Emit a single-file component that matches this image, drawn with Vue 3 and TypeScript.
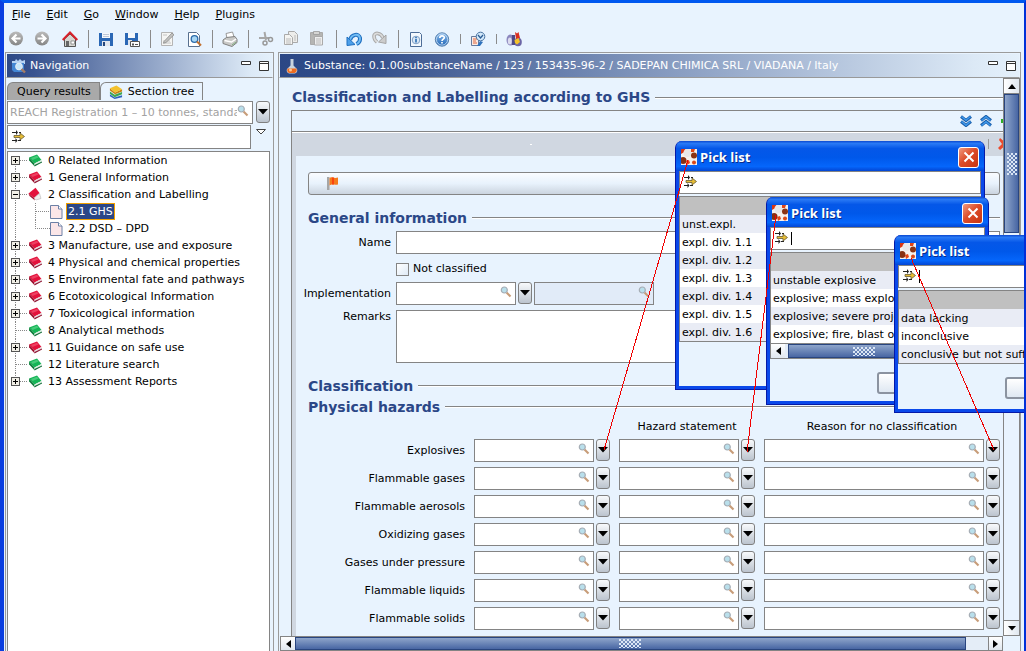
<script setup lang="ts">
import { ref } from 'vue'

interface Tool { icon: string; label: string; kind?: 'home' }
interface TreeNode {
  id: string
  label: string
  icon: 'red' | 'green' | 'open' | 'page'
  expand?: '+' | '-'
  child?: boolean
  last?: boolean
}

const menus = ['File', 'Edit', 'Go', 'Window', 'Help', 'Plugins']

const toolGroups: Tool[][] = [
  [
    { icon: 'back', label: 'Back' },
    { icon: 'forward', label: 'Forward' },
    { icon: 'home', label: 'Home', kind: 'home' },
  ],
  [{ icon: 'save', label: 'Save' }, { icon: 'saveas', label: 'Save as' }],
  [{ icon: 'edit', label: 'Edit' }, { icon: 'preview', label: 'Preview' }],
  [{ icon: 'print', label: 'Print' }],
  [{ icon: 'cut', label: 'Cut' }, { icon: 'copy', label: 'Copy' }, { icon: 'paste', label: 'Paste' }],
  [{ icon: 'undo', label: 'Undo' }, { icon: 'redo', label: 'Redo' }],
  [{ icon: 'info', label: 'Information' }, { icon: 'help', label: 'Help' }],
  [{ icon: 'check', label: 'Check' }],
  [{ icon: 'query', label: 'Query tool' }],
]

const nodes: TreeNode[] = [
  { id: '0', label: '0 Related Information', icon: 'green', expand: '+' },
  { id: '1', label: '1 General Information', icon: 'red', expand: '+' },
  { id: '2', label: '2 Classification and Labelling', icon: 'open', expand: '-' },
  { id: '2.1', label: '2.1 GHS', icon: 'page', child: true },
  { id: '2.2', label: '2.2 DSD – DPD', icon: 'page', child: true, last: true },
  { id: '3', label: '3 Manufacture, use and exposure', icon: 'red', expand: '+' },
  { id: '4', label: '4 Physical and chemical properties', icon: 'red', expand: '+' },
  { id: '5', label: '5 Environmental fate and pathways', icon: 'red', expand: '+' },
  { id: '6', label: '6 Ecotoxicological Information', icon: 'red', expand: '+' },
  { id: '7', label: '7 Toxicological information', icon: 'red', expand: '+' },
  { id: '8', label: '8 Analytical methods', icon: 'green' },
  { id: '11', label: '11 Guidance on safe use', icon: 'red', expand: '+' },
  { id: '12', label: '12 Literature search', icon: 'green' },
  { id: '13', label: '13 Assessment Reports', icon: 'green', expand: '+', last: true },
]
const selected = ref('2.1')

const hazards = [
  'Explosives', 'Flammable gases', 'Flammable aerosols', 'Oxidizing gases',
  'Gases under pressure', 'Flammable liquids', 'Flammable solids',
]
const columns = ['Hazard category', 'Hazard statement', 'Reason for no classification']

const pickLists = [
  { id: 'category', caret: false, scroll: false, button: false, rows: ['unst.expl.', 'expl. div. 1.1', 'expl. div. 1.2', 'expl. div. 1.3', 'expl. div. 1.4', 'expl. div. 1.5', 'expl. div. 1.6'] },
  { id: 'statement', caret: true, scroll: true, button: true, rows: ['unstable explosive', 'explosive; mass explos', 'explosive; severe proje', 'explosive; fire, blast or'] },
  { id: 'reason', caret: true, scroll: false, button: true, rows: ['data lacking', 'inconclusive', 'conclusive but not suffi'] },
]
</script>

<template>
  <div class="window">
    <svg class="defs" aria-hidden="true">
      <defs>
        <linearGradient id="g-orb" x1="0" y1="0" x2="0" y2="1"><stop offset="0" stop-color="#bbb" /><stop offset="1" stop-color="#858585" /></linearGradient>
        <linearGradient id="g-help" x1="0" y1="0" x2="0" y2="1"><stop offset="0" stop-color="#8fc0f0" /><stop offset="1" stop-color="#1c62b4" /></linearGradient>
      </defs>
      <symbol id="back" viewBox="0 0 16 16"><circle cx="8" cy="7.500" r="7" fill="url(#g-orb)" /><path d="M8.500 3.500 4.500 7.500l4 4M5 7.500h7.500" fill="none" stroke="#fff" stroke-width="2.200" /></symbol>
      <symbol id="forward" viewBox="0 0 16 16"><circle cx="8" cy="7.500" r="7" fill="url(#g-orb)" /><path d="M7.500 3.500l4 4-4 4M11 7.500H3.500" fill="none" stroke="#fff" stroke-width="2.200" /></symbol>
      <symbol id="home" viewBox="0 0 16 16"><path d="M2.500 8v7.500h11V8L8 3z" fill="#d5d5d0" stroke="#555" /><path d="M.7 9 8 1.500 15.300 9" fill="none" stroke="#d8202a" stroke-width="2" /><path d="M4 10h3v5H4z" fill="#666" /><path d="M9 10h3.500v3H9z" fill="#fff" stroke="#777" stroke-width=".7" /></symbol>
      <symbol id="save" viewBox="0 0 16 16"><path d="M1 2h14v13H1z" fill="#2a67b5" /><path d="M4 2h8v5H4z" fill="#f4f7fb" /><path d="M5 3.500h6M5 5.500h6" stroke="#bcc7d8" /><path d="M4 10h8v5H4z" fill="#dfe5ee" /><path d="M5 11h2v4H5z" fill="#23467d" /></symbol>
      <symbol id="saveas" viewBox="0 0 16 16"><path d="M1 2h13v12H1z" fill="#2a67b5" /><path d="M4 2h7v5H4z" fill="#f4f7fb" /><path d="M4 9h4v5H4z" fill="#dfe5ee" /><path d="M6.500 10.500h9v5h-9z" fill="#fff" stroke="#555" /><path d="M8 13.500h2M9 12v3M11 13.500h3" stroke="#555" /></symbol>
      <symbol id="edit" viewBox="0 0 16 16"><path d="M1.500 1.500h11v13h-11z" fill="#f5f5f3" stroke="#b5b5b5" /><path d="M3 10h7M3 12h8M3 4h4" stroke="#c4c4c4" /><path d="M4 10.500 12 2l2 1.800L6 11.500l-2.500.7z" fill="#c2c2c0" stroke="#8a8a8a" stroke-width=".8" /></symbol>
      <symbol id="preview" viewBox="0 0 16 16"><path d="M2.500 1.500h8l3 3v11h-11z" fill="#fff" stroke="#58708f" /><circle cx="8.500" cy="8" r="3.300" fill="#a8d7f5" stroke="#2b6bab" stroke-width="1.300" /><path d="M11 10.500l4 4" stroke="#c1702f" stroke-width="2" /></symbol>
      <symbol id="print" viewBox="0 0 16 16"><path d="M4 2.500 10.500 1l2 6.500H5z" fill="#fff" stroke="#999" /><path d="M1 9 4.500 6.500 13 5.500 15 8.500v3l-5 4L1 12.500z" fill="#c9c9c7" stroke="#808080" /><path d="M2.500 9.500 9.500 11l4.500-3" stroke="#fff" fill="none" stroke-width="1.500" /><path d="M10 14l4-3" stroke="#7fae7f" /></symbol>
      <symbol id="cut" viewBox="0 0 16 16"><path d="M6.500 1l1.500 8M1 7h10" stroke="#a7a7a7" stroke-width="2" fill="none" /><circle cx="7" cy="12" r="2" fill="none" stroke="#999" stroke-width="1.500" /><circle cx="12.500" cy="8.500" r="2" fill="none" stroke="#999" stroke-width="1.500" /></symbol>
      <symbol id="copy" viewBox="0 0 16 16"><path d="M4.500.5h6l3 3v8h-9z" fill="#ededeb" stroke="#aaa" /><path d="M.5 3.500h5l3 3v7h-8z" fill="#f4f4f2" stroke="#aaa" /><path d="M2 8h5M2 10h5M2 12h5M10 5h2M10 7h2M10 9h2" stroke="#bbb" /></symbol>
      <symbol id="paste" viewBox="0 0 16 16"><path d="M.5 1.500h12v12H.5z" fill="#b5b5b3" stroke="#aaa" /><path d="M3.500.5h6v3h-6z" fill="#d5d5d3" stroke="#999" stroke-width=".8" /><path d="M4.500 5.500h8v8.500h-8z" fill="#eee" stroke="#aaa" /><path d="M6 8h5M6 10h5M6 12h5" stroke="#bbb" /></symbol>
      <symbol id="undo" viewBox="0 0 16 16"><path d="M4 9C5.500 3 13 2 14 7c.3 3-1.500 5-3.500 6" fill="none" stroke="#1f6fc0" stroke-width="4" /><path d="M4 9C5.500 3 13 2 14 7c.3 3-1.500 5-3.500 6" fill="none" stroke="#73bdf4" stroke-width="1.800" /><path d="M1 6v8.500l8-1z" fill="#4da0ea" stroke="#1f6fc0" /></symbol>
      <symbol id="redo" viewBox="0 0 16 16"><path d="M11 7C9 1 2 1.500 2 5c0 3 1 4.500 3 6" fill="none" stroke="#a9a9a9" stroke-width="3.600" /><path d="M11 7C9 1 2 1.500 2 5c0 3 1 4.500 3 6" fill="none" stroke="#dcdcdc" stroke-width="1.600" /><path d="M14 4v8.500L6.500 11z" fill="#ccc" stroke="#a5a5a5" /></symbol>
      <symbol id="info" viewBox="0 0 16 16"><path d="M2.500 1.500h9l2 2v12h-11z" fill="#f4f9fe" stroke="#4d6d98" /><circle cx="8" cy="9" r="3.800" fill="#dbe9f7" stroke="#7f9fc5" /><path d="M8 8v3.500M8 6v1.200" stroke="#1b63b0" stroke-width="1.500" /></symbol>
      <symbol id="help" viewBox="0 0 16 16"><circle cx="8" cy="8.500" r="6.700" fill="url(#g-help)" stroke="#5c84b0" /><circle cx="8" cy="8.500" r="5.600" fill="none" stroke="#cfe3f7" stroke-width=".8" /><path d="M5.800 7c0-3 4.700-2.800 4.500-.2C10.200 8.200 8 8.200 8 10M8 11v1.500" fill="none" stroke="#fff" stroke-width="1.700" /></symbol>
      <symbol id="check" viewBox="0 0 16 16"><path d="M1.500 5.500h7v9h-7z" fill="#f8e9e4" stroke="#667a9d" /><path d="M3 8h4M3 10h3M3 12h4" stroke="#e0673d" /><circle cx="10.500" cy="5.500" r="4.300" fill="#d2e8fa" stroke="#47719f" /><path d="M8 4l2.500 3L13 4" fill="none" stroke="#2b5c94" stroke-width="1.300" /><path d="M7 15l3-5 3 1-3 4z" fill="#2f72bd" /></symbol>
      <symbol id="query" viewBox="0 0 16 16"><ellipse cx="4.500" cy="9" rx="4" ry="5.500" fill="#8b86bd" /><ellipse cx="3.800" cy="10" rx="2" ry="3.500" fill="#dcdbee" /><ellipse cx="12" cy="11" rx="3.800" ry="4.300" fill="#6b65a5" /><path d="M6 4h3v10H6z" fill="#4e4a86" /><path d="M9 1l2 1.500L12.500 1l1.500 6-4 1z" fill="#d92e20" /><path d="M8.500 9l4-2 1.500 4-3 2.500-2-1.500z" fill="#f4c22a" /></symbol>
      <symbol id="book-red" viewBox="0 0 16 16"><path d="M1 4.500 9 1.500 13.500 7 6.500 10.500z" fill="#e3123c" /><path d="M3 5l6-2.200L10.500 4.500 4.500 7z" fill="#f4617b" opacity=".6" /><path d="M1 4.500 6.500 10.500v2.700L1.200 7.500z" fill="#9d0c2b" /><path d="M6.500 10.500 13.500 7v1.700l-7 3.600z" fill="#e6d9dc" /><path d="M6.500 12.100 14 8.500v1l-7.500 3.900z" fill="#8c1130" /></symbol>
      <symbol id="book-green" viewBox="0 0 16 16"><path d="M1 4.500 9 1.500 13.500 7 6.500 10.500z" fill="#14b556" /><path d="M3 5l6-2.200L10.500 4.500 4.500 7z" fill="#6ad994" opacity=".6" /><path d="M1 4.500 6.500 10.500v2.700L1.200 7.500z" fill="#0a7e39" /><path d="M6.500 10.500 13.500 7v1.700l-7 3.600z" fill="#dcebe0" /><path d="M6.500 12.100 14 8.500v1l-7.500 3.900z" fill="#0e6b35" /></symbol>
      <symbol id="book-open" viewBox="0 0 16 16"><path d="M.5 6.500 7.500.8 11.500 6 6 11z" fill="#e3123c" /><path d="M6 11l5.500-4.500 1.500 5-5 1.500z" fill="#f1eeee" stroke="#aaa" stroke-width=".5" /><path d="M.5 6.500 6 11l1 2.500L1.500 9z" fill="#a30c2c" /></symbol>
      <symbol id="page" viewBox="0 0 13 16"><path d="M.5 1.500h8l3.500 3.500v9.500H.5z" fill="#fbe6e8" stroke="#6c80a6" /><path d="M8.500 1.500V5H12" fill="#fff" stroke="#6c80a6" /></symbol>
      <symbol id="lens" viewBox="0 0 12 12"><path d="M6.500 6.500 10.500 10.500" stroke="#c79c78" stroke-width="2.200" /><circle cx="4.300" cy="4" r="3" fill="#b9dfeb" stroke="#a5adb5" stroke-width="1.200" /></symbol>
      <symbol id="filter" viewBox="0 0 14 13"><path d="M0 2.500h5M7 2.500h2M0 10.500h4M6 10.500h3" stroke="#222" /><path d="M4 0v5l2-2.500zM3.500 8v5l2-2.500z" fill="#222" /><path d="M2 5.500h6V3l4.500 3.500L8 10V7.500H2z" fill="#e7bd35" stroke="#665a35" stroke-width=".8" /></symbol>
      <symbol id="navi" viewBox="0 0 16 16"><path d="M1 3h3l1-2 2 2 2-2 2 2 3-1v4H1z" fill="#b7d4f4" /><path d="M1 5h12v9H3L1 12z" fill="#4386d4" /><circle cx="8" cy="8.500" r="3.400" fill="#c9e7fa" stroke="#e8eef4" /><path d="M10.500 11l3.500 3.500" stroke="#a57c64" stroke-width="2.400" /></symbol>
      <symbol id="flask" viewBox="0 0 12 16"><path d="M4.500 1h3v6.500L11 11c1 3-1 4.500-3 4.500H4c-2 0-4-1.500-3-4.500l3.500-3.500z" fill="#c9d3de" /><path d="M1.500 10.500h9c.8 3-1 4.500-2.500 4.500H4c-2 0-3.300-1.500-2.500-4.500z" fill="#ee6b1f" /><circle cx="4.500" cy="12" r="1.500" fill="#ffc794" /></symbol>
      <symbol id="books" viewBox="0 0 15 15"><path d="M1 10l5 3.500 8-2.500v2l-8 2-5-3z" fill="#2d63bd" /><path d="M1 7l5 3.500 8-3v2.500l-8 3-5-3.500z" fill="#3fa650" /><path d="M1 3.500 6.500 8l7.500-3.500V7l-7.500 3L1 6z" fill="#c98412" /><path d="M1 3.500 8 .5l6 4L6.500 8z" fill="#f3c12d" /></symbol>
      <symbol id="flag" viewBox="0 0 12 15"><path d="M1 1h2.500v13H1z" fill="#a6a6a6" /><path d="M3.500 2C6 0 7 3 12 1.500v7C8 9.500 6.500 7.500 3.500 9.500z" fill="#f47a1c" /><path d="M6 1.500h2v7H6z" fill="#fa4210" /></symbol>
      <symbol id="down2" viewBox="0 0 12 12"><path d="M1 1.500 6 5.500l5-4M1 6.500l5 4 5-4" fill="none" stroke="#185ca8" stroke-width="3" /><path d="M1.500 1.500 6 5.300l4.500-3.800M1.500 6.500 6 10.300l4.500-3.800" fill="none" stroke="#3d97ea" stroke-width="1.500" /></symbol>
      <symbol id="up2" viewBox="0 0 12 12"><path d="M1 5.500l5-4 5 4M1 10.500l5-4 5 4" fill="none" stroke="#185ca8" stroke-width="3" /><path d="M1.500 5.500 6 1.700l4.500 3.800M1.500 10.500 6 6.700l4.500 3.800" fill="none" stroke="#3d97ea" stroke-width="1.500" /></symbol>
      <symbol id="add" viewBox="0 0 12 12"><path d="M0 4h4V0h4v4h4v4H8v4H4V8H0z" fill="#2fae26" /></symbol>
      <symbol id="remove" viewBox="0 0 14 14"><path d="M2 1l5 4 5-4 1 2-4 4 4 4-2 2-4-4-5 4-2-2 4-4-3-4z" fill="#ec4a2c" /></symbol>
      <symbol id="cells" viewBox="0 0 16 16"><path d="M0 0h16v16H0z" fill="#f7f1ee" /><path d="M0 0h4l1 2-5 3z" fill="#d93613" /><circle cx="6.500" cy="4" r="4" fill="#e9e7e8" /><circle cx="13" cy="6.500" r="3" fill="#8c3416" /><circle cx="2" cy="11.500" r="3.500" fill="#873113" /><circle cx="13" cy="13.500" r="2" fill="#d9491b" /><path d="M10 0h4l-1 3h-3zM5 12l3-1 1 3-3 2z" fill="#e34618" /></symbol>
      <symbol id="tri-down" viewBox="0 0 10 6"><path d="M0 0h10L5 5.500z" fill="#000" /></symbol>
      <symbol id="tri-up" viewBox="0 0 8 5"><path d="M0 5h8L4 0z" fill="#000" /></symbol>
      <symbol id="tri-left" viewBox="0 0 5 8"><path d="M5 0v8L0 4z" fill="#000" /></symbol>
      <symbol id="tri-right" viewBox="0 0 5 8"><path d="M0 0v8l5-4z" fill="#000" /></symbol>
      <symbol id="min" viewBox="0 0 10 4"><path d="M.5.5h9v3h-9z" fill="#fff" stroke="#333" /></symbol>
      <symbol id="max" viewBox="0 0 10 10"><path d="M.5.5h9v9h-9z" fill="#fff" stroke="#333" /><path d="M0 2.500h10" stroke="#333" /></symbol>
    </svg>

    <nav class="menubar" aria-label="Main menu">
      <button v-for="m in menus" :key="m" type="button"><u>{{ m[0] }}</u>{{ m.slice(1) }}</button>
    </nav>

    <div class="toolbar" role="toolbar" aria-label="Tools">
      <template v-for="(group, gi) in toolGroups" :key="gi">
        <span v-if="gi" class="sep" :class="{ short: gi > 6 }"></span>
        <button v-for="t in group" :key="t.icon" type="button" :class="['tool', t.kind]" :aria-label="t.label">
          <svg class="i16"><use :href="'#' + t.icon" /></svg>
        </button>
      </template>
    </div>

    <div class="panels">
      <aside class="panel nav">
        <header class="titlebar">
          <svg class="i16"><use href="#navi" /></svg>
          <span class="title">Navigation</span>
          <button type="button" class="win" aria-label="Minimize"><svg class="wmin"><use href="#min" /></svg></button>
          <button type="button" class="win" aria-label="Maximize"><svg class="wmax"><use href="#max" /></svg></button>
        </header>
        <div class="tabs" role="tablist">
          <button type="button" role="tab" class="tab">Query results</button>
          <button type="button" role="tab" class="tab active" aria-selected="true">
            <svg class="i14"><use href="#books" /></svg>Section tree
          </button>
        </div>
        <div class="combo nav-combo">
          <div class="field">
            <input type="text" aria-label="Template" placeholder="REACH Registration 1 – 10 tonnes, standar" />
            <svg class="lens"><use href="#lens" /></svg>
          </div>
          <button type="button" class="drop" aria-label="Choose template"><svg><use href="#tri-down" /></svg></button>
        </div>
        <div class="filter-row">
          <div class="field filter">
            <svg class="filter-icon"><use href="#filter" /></svg>
            <input type="text" aria-label="Filter sections" />
          </div>
          <button type="button" class="view-menu" aria-label="View menu">
            <svg viewBox="0 0 10 6"><path d="M.5.5h9L5 5z" fill="#fff" stroke="#444" /></svg>
          </button>
        </div>
        <ul class="tree">
          <li v-for="n in nodes" :key="n.id">
            <svg :class="['guide', { deep: n.child }]">
              <path :d="(n.last && !n.child ? 'M7.500 0V8' : n.id === '0' ? 'M7.500 8V17' : 'M7.500 0V17')" class="dots" />
              <path v-if="!n.child" d="M8 8.500H20" class="dots" />
              <path v-else :d="(n.last ? 'M27.500 0V8.500H42' : 'M27.500 0V17M28 8.500H42')" class="dots" />
              <g v-if="n.expand">
                <rect x="3.500" y="4.500" width="8" height="8" fill="#f1efe6" stroke="#555" />
                <path :d="n.expand === '+' ? 'M5 8.500h5M7.500 6v5' : 'M5 8.500h5'" stroke="#000" fill="none" />
              </g>
            </svg>
            <svg v-if="n.icon === 'page'" class="page"><use href="#page" /></svg>
            <svg v-else class="i16"><use :href="'#book-' + n.icon" /></svg>
            <button type="button" :class="['node', { selected: selected === n.id }]" @click="selected = n.id">{{ n.label }}</button>
          </li>
        </ul>
      </aside>

      <main class="panel doc">
        <header class="titlebar">
          <svg class="flask"><use href="#flask" /></svg>
          <span class="title">Substance: 0.1.00substanceName / 123 / 153435-96-2 / SADEPAN CHIMICA SRL / VIADANA / Italy</span>
          <button type="button" class="win" aria-label="Minimize"><svg class="wmin"><use href="#min" /></svg></button>
          <button type="button" class="win" aria-label="Maximize"><svg class="wmax"><use href="#max" /></svg></button>
        </header>

        <div class="scrollpane">
          <div class="content">
            <h1 class="rule-head page-head"><span>Classification and Labelling according to GHS</span></h1>
            <section class="box">
              <div class="box-tools">
                <button type="button" aria-label="Expand all"><svg><use href="#down2" /></svg></button>
                <button type="button" aria-label="Collapse all"><svg><use href="#up2" /></svg></button>
                <button type="button" aria-label="Add"><svg><use href="#add" /></svg></button>
              </div>
              <div class="band">
                <span class="mark"></span>
                <span class="band-sep"></span>
                <button type="button" aria-label="Remove"><svg><use href="#remove" /></svg></button>
              </div>
              <form class="form" @submit.prevent>
                <button type="button" class="flagbar" aria-label="Flags"><svg><use href="#flag" /></svg></button>

                <h2 class="rule-head"><span>General information</span></h2>
                <div class="row name">
                  <label for="name">Name</label>
                  <input id="name" type="text" class="field grow" />
                </div>
                <div class="row check">
                  <span></span>
                  <label class="tick"><input type="checkbox" />Not classified</label>
                </div>
                <div class="row impl">
                  <label for="impl">Implementation</label>
                  <div class="impl-fields">
                    <div class="field"><input id="impl" type="text" /><svg class="lens"><use href="#lens" /></svg></div>
                    <button type="button" class="drop" aria-label="Choose implementation"><svg><use href="#tri-down" /></svg></button>
                    <div class="field off"><input type="text" disabled aria-label="Other implementation" /><svg class="lens"><use href="#lens" /></svg></div>
                  </div>
                </div>
                <div class="row remarks">
                  <label for="remarks">Remarks</label>
                  <textarea id="remarks" class="field"></textarea>
                </div>

                <h2 class="rule-head spaced"><span>Classification</span></h2>
                <h3 class="rule-head"><span>Physical hazards</span></h3>
                <div class="hazards heads">
                  <span></span><span></span><span>{{ columns[1] }}</span><span>{{ columns[2] }}</span>
                </div>
                <div v-for="(h, hi) in hazards" :key="h" class="hazards">
                  <label :for="'hz' + hi + '-0'">{{ h }}</label>
                  <div v-for="(c, ci) in columns" :key="c" class="combo">
                    <div class="field">
                      <input :id="'hz' + hi + '-' + ci" type="text" :aria-label="h + ', ' + c" />
                      <svg class="lens"><use href="#lens" /></svg>
                    </div>
                    <button type="button" class="drop" :aria-label="'Choose ' + c"><svg><use href="#tri-down" /></svg></button>
                  </div>
                </div>
              </form>
            </section>
          </div>

          <div class="vbar">
            <button type="button" aria-label="Scroll up"><svg class="ud"><use href="#tri-up" /></svg></button>
            <div class="vthumb"><i class="grip tall"></i></div>
            <button type="button" class="end" aria-label="Scroll down"><svg class="ud"><use href="#tri-down" /></svg></button>
          </div>
          <div class="hbar">
            <button type="button" aria-label="Scroll left"><svg class="lr"><use href="#tri-left" /></svg></button>
            <div class="hthumb"><i class="grip"></i></div>
            <button type="button" class="end" aria-label="Scroll right"><svg class="lr"><use href="#tri-right" /></svg></button>
          </div>
        </div>
      </main>
    </div>

    <section v-for="p in pickLists" :key="p.id" :class="['dialog', p.id]" role="dialog" aria-label="Pick list">
      <header>
        <svg class="i16"><use href="#cells" /></svg>
        <span>Pick list</span>
        <button type="button" class="close" aria-label="Close">
          <svg viewBox="0 0 12 12"><path d="M1.500 1.500l9 9M10.500 1.500l-9 9" stroke="#fff" stroke-width="2" /></svg>
        </button>
      </header>
      <div class="dialog-body">
        <div class="field filter">
          <svg class="filter-icon"><use href="#filter" /></svg>
          <i v-if="p.caret" class="caret"></i>
          <input type="text" aria-label="Filter values" />
        </div>
        <div class="list">
          <table>
            <thead><tr><th scope="col" aria-label="Value"></th></tr></thead>
            <tbody><tr v-for="r in p.rows" :key="r"><td>{{ r }}</td></tr></tbody>
          </table>
          <div v-if="p.scroll" class="hbar small">
            <button type="button" aria-label="Scroll left"><svg class="lr"><use href="#tri-left" /></svg></button>
            <div class="hthumb"><i class="grip"></i></div>
          </div>
        </div>
        <div class="actions"><button v-if="p.button" type="button" aria-label="OK"></button></div>
      </div>
    </section>

    <svg class="links" aria-hidden="true">
      <path d="M688 160 604 450M776 215 747 452M911 258 994 450" stroke="#f00000" fill="none" shape-rendering="crispEdges" />
    </svg>
  </div>
</template>

<style>
html, body { height: 100%; overflow: hidden; }
#app { height: 100%; }
</style>

<style scoped>
.window {
  --line: #848484;
  --bg: #e8f3fe;
  --ink: #2b4787;
  position: relative;
  box-sizing: border-box;
  height: 100vh;
  overflow: hidden;
  display: flex;
  flex-direction: column;
  background: var(--bg);
  border-top: 3px solid #0058f0;
  border-left: 4px solid #0a3ee0;
  border-right: 2px solid #0030d8;
  font: 11px/14px "DejaVu Sans", sans-serif;
  color: #000;
}
.window * { box-sizing: border-box; }
button { font: inherit; color: inherit; border: 0; padding: 0; margin: 0; background: none; }
input, textarea { font: inherit; color: inherit; border: 0; padding: 0; margin: 0; background: none; outline: 0; min-width: 0; border-radius: 0; }
svg { display: block; flex: none; }
.defs { position: absolute; width: 0; height: 0; }
.i16 { width: 16px; height: 16px; }
.i14 { width: 14px; height: 14px; }

.menubar { display: flex; gap: 16px; height: 23px; padding-left: 8px; flex: none; }
.menubar u { text-underline-offset: 1px; }
.toolbar { display: flex; align-items: center; height: 26px; flex: none; }
.tool { width: 26px; height: 22px; display: flex; justify-content: center; align-items: center; }
.tool:first-child { margin-left: -1px; }
.tool.home { margin-left: 2px; }
.sep { width: 10px; height: 18px; display: flex; justify-content: center; }
.sep::before { content: ""; width: 1px; background: #8b8b8b; }
.sep.short { height: 10px; }

.panels { flex: 1; min-height: 0; display: flex; gap: 4px; padding: 0 3px 0 1px; }
.panel { display: flex; flex-direction: column; min-height: 0; border: 1px solid #9b9b9b; border-bottom: 0; }
.nav { width: 269px; flex: none; }
.doc { flex: 1; min-width: 0; }
.titlebar { display: flex; align-items: center; height: 25px; flex: none; padding: 0 3px 0 4px; color: #fff; border: 1px solid var(--bg); border-bottom: 1px solid #999; background: linear-gradient(90deg, #2e4986, #38538f 10%, #dce9f6 92%, #e4f0fb); }
.doc .titlebar { padding-left: 6px; background: linear-gradient(90deg, #2b4785, #334f8b 12%, #dce9f6 94%, #e4f0fb); }
.titlebar .title { flex: 1; margin-left: 3px; white-space: nowrap; overflow: hidden; }
.flask { width: 12px; height: 16px; }
.doc .title { margin-left: 6px; }
.win { width: 10px; height: 14px; margin-left: 8px; display: flex; align-items: center; }
.wmin { width: 10px; height: 4px; margin-bottom: 6px; }
.wmax { width: 10px; height: 10px; }

.tabs { display: flex; margin-top: 3px; padding-left: 1px; height: 19px; flex: none; align-items: flex-end; }
.tab { height: 18px; padding: 0 8px 0 9px; background: #a9a9a9; border: 1px solid var(--line); border-bottom: 0; border-radius: 6px 0 0 0; }
.tab.active { display: flex; align-items: center; gap: 5px; padding: 0 8px; background: var(--bg); }
.nav-combo { margin: 1px 3px 0 1px; padding-bottom: 1px; height: 24px; flex: none; }
.combo { display: flex; gap: 2px; min-width: 0; }
.field { display: flex; align-items: center; min-width: 0; height: 23px; border: 1px solid var(--line); background: #fff; }
.combo .field { flex: 1; }
.field input { flex: 1; width: 0; height: 100%; padding: 0 1px; }
.nav-combo .field input { padding: 0 0 0 2px; }
.nav-combo input::placeholder { color: #a2a2a2; opacity: 1; }
.lens { width: 12px; height: 12px; margin: 0 3px 3px 0; }
.drop { width: 14px; height: 22px; flex: none; display: flex; align-items: center; justify-content: center; border: 1px solid #808080; border-radius: 3px; background: linear-gradient(#f8fafc, #bcc4ce); }
.drop svg { width: 10px; height: 6px; }
.nav-combo .drop { margin-left: 1px; }
.filter-row { display: flex; margin-left: 1px; gap: 5px; flex: none; }
.filter { padding-left: 4px; }
.filter-row .filter { width: 244px; height: 24px; }
.filter-icon { width: 14px; height: 13px; margin-bottom: 2px; }
.view-menu { width: 10px; height: 14px; display: flex; align-items: center; }
.view-menu svg { width: 10px; height: 6px; }

.tree { flex: 1; list-style: none; margin: 2px 3px 0 1px; padding: 0; background: #fff; border: 1px solid var(--line); border-bottom: 0; overflow: hidden; }
.tree li { display: flex; align-items: center; height: 17px; }
.guide { width: 20px; height: 17px; }
.guide.deep { width: 42px; }
.dots { stroke: #888; stroke-dasharray: 1 1; fill: none; shape-rendering: crispEdges; }
.page { width: 13px; height: 16px; }
.node { height: 17px; line-height: 15px; margin-left: 3px; padding: 0 1px; border: 1px solid transparent; white-space: nowrap; }
.i16 + .node { margin-left: 2px; }
.node.selected { background: var(--ink); color: #fff; border-color: #f0a000; }

.scrollpane { flex: 1; min-height: 0; display: grid; grid-template: minmax(0, 1fr) 15px / minmax(0, 1fr) 17px; padding-left: 1px; }
.content { overflow: hidden; }
.rule-head { display: flex; align-items: center; gap: 5px; height: 21px; margin: 0; font: bold 14px/20px "DejaVu Sans", sans-serif; color: var(--ink); white-space: nowrap; }
.rule-head::after { content: ""; flex: 1; height: 2px; background: linear-gradient(var(--line) 50%, #fff 50%); }
.page-head { height: 32px; padding: 5px 0 0 12px; align-items: flex-start; line-height: 28px; }
.page-head::after { margin-top: 14px; }
.box { margin-left: 11px; border: 1px solid var(--line); border-width: 1px 0 0 1px; background: #d0d7e1; }
.box-tools { display: flex; justify-content: flex-end; align-items: center; gap: 8px; height: 21px; margin-right: -10px; background: var(--bg); border-bottom: 1px solid var(--line); box-shadow: 0 1px #fff; }
.box-tools svg { width: 12px; height: 12px; }
.box-tools button:last-child { margin-left: 1px; }
.band { display: flex; align-items: center; height: 24px; padding-left: 238px; margin-right: -9px; }
.mark { width: 2px; height: 1px; margin-right: auto; background: #fff; }
.band-sep { width: 1px; height: 10px; margin-right: 9px; background: #999; }
.band svg { width: 14px; height: 14px; }
.form { margin-left: 4px; padding: 16px 3px 12px 12px; background: var(--bg); }
.flagbar { display: flex; align-items: center; width: 100%; height: 23px; padding-left: 17px; margin-bottom: 12px; border: 1px solid var(--line); border-radius: 3px; background: linear-gradient(#fafcff, #e8f2fc 50%, #cbd4df); }
.flagbar svg { width: 12px; height: 15px; }
.row { display: grid; grid-template-columns: 83px minmax(0, 1fr); column-gap: 5px; align-items: center; }
.row > label:first-child { justify-self: end; white-space: nowrap; }
.row.name { margin-top: 3px; }
.row.check { margin-top: 8px; height: 13px; }
.tick { display: flex; align-items: center; gap: 4px; }
.tick input { appearance: none; width: 13px; height: 13px; border: 1px solid var(--line); background: linear-gradient(135deg, #fff, #dfeaf6); }
.row.impl { margin-top: 7px; }
.impl-fields { display: flex; gap: 2px; }
.impl-fields .field { width: 120px; }
.impl-fields .off { background: #e1ebf8; }
.row.remarks { margin-top: 5px; align-items: start; }
.remarks textarea { width: 100%; height: 53px; resize: none; }
.spaced { margin-top: 12px; }
.hazards { display: grid; grid-template-columns: 157px 136px 136px minmax(0, 1fr); column-gap: 9px; align-items: center; margin-bottom: 5px; }
.hazards > label { text-align: right; }
.heads { height: 20px; margin-bottom: 2px; text-align: center; }

.vbar { display: flex; flex-direction: column; width: 17px; background: var(--bg); border: 1px solid var(--line); }
.vbar button { height: 15px; display: flex; align-items: center; justify-content: center; flex: none; background: linear-gradient(90deg, #fff, #e0e7ef); border-bottom: 1px solid var(--line); }
.vbar .end { margin-top: auto; border-top: 1px solid var(--line); border-bottom: 0; }
.ud { width: 8px; height: 5px; }
.lr { width: 5px; height: 8px; }
.vthumb { height: 25%; display: flex; align-items: center; justify-content: center; border: 1px solid #29457f; background: linear-gradient(90deg, #8ea5cb, #4866a3); }
.hbar { grid-column: 1; display: flex; height: 15px; border: 1px solid var(--line); background: #e4edf7; }
.hbar button { width: 14px; flex: none; display: flex; align-items: center; justify-content: center; background: linear-gradient(#fff, #e0e7ef); }
.hbar .end { margin-left: auto; border-left: 1px solid var(--line); }
.hthumb { width: 93%; display: flex; align-items: center; justify-content: center; border: 1px solid #29457f; background: linear-gradient(#8ea5cb, #4866a3); }
.grip { width: 22px; height: 9px; background: radial-gradient(circle at 1px 1px, #dbe6f5 1px, transparent 1px) 0 0 / 4px 4px, radial-gradient(circle at 3px 3px, #dbe6f5 1px, transparent 1px) 0 0 / 4px 4px; }
.grip.tall { width: 10px; height: 22px; }

.dialog { position: absolute; display: flex; flex-direction: column; padding: 0 3px 3px; border: 1px solid #0519a8; border-top: 0; border-radius: 7px 7px 0 0; background: #0a48ea; overflow: hidden; }
.dialog.category { left: 671px; top: 138px; width: 310px; height: 249px; }
.dialog.statement { left: 762px; top: 194px; width: 223px; height: 208px; }
.dialog.reason { left: 890px; top: 232px; width: 223px; height: 178px; }
.dialog header { display: flex; align-items: center; gap: 3px; height: 30px; margin: 0 -3px; padding: 2px 5px 0; flex: none; background: linear-gradient(#0a48d0, #2a7af5 8%, #0557e8 25%, #0058ea 55%, #0566fb 85%, #0346d4); }
.dialog header span { flex: 1; color: #fff; font: bold 13px/18px "Open Sans", "Noto Sans", sans-serif; text-shadow: 1px 1px #0a2c8c; }
.close { width: 21px; height: 21px; display: flex; align-items: center; justify-content: center; border: 1px solid #fff; border-radius: 3px; background: linear-gradient(135deg, #f09a80, #dd4d2a 45%, #c83410); }
.close svg { width: 12px; height: 12px; }
.dialog-body { flex: 1; display: flex; flex-direction: column; min-height: 0; background: var(--bg); }
.caret { width: 1px; height: 13px; background: #000; margin-left: 2px; }
.list { margin-top: 2px; border: 1px solid var(--line); border-width: 1px 0 1px 1px; }
table { width: 100%; table-layout: fixed; border-collapse: collapse; background: #fff; }
th, td { height: 18px; padding: 2px 2px 0; text-align: left; white-space: nowrap; }
th { background: #c0c0c0; }
tbody tr:nth-child(odd) { background: #e9ecf5; }
.small { border-width: 1px 0 0; }
.small .hthumb { width: auto; flex: 1; padding-right: 46px; margin-left: 3px; }
.actions { padding: 13px 0 0 107px; }
.actions button { width: 60px; height: 22px; border: 2px solid #8b93a0; border-radius: 3px; background: linear-gradient(#fff, #dfe8f2); }
.links { position: absolute; left: -4px; top: -3px; width: 1026px; height: 651px; pointer-events: none; }
</style>
